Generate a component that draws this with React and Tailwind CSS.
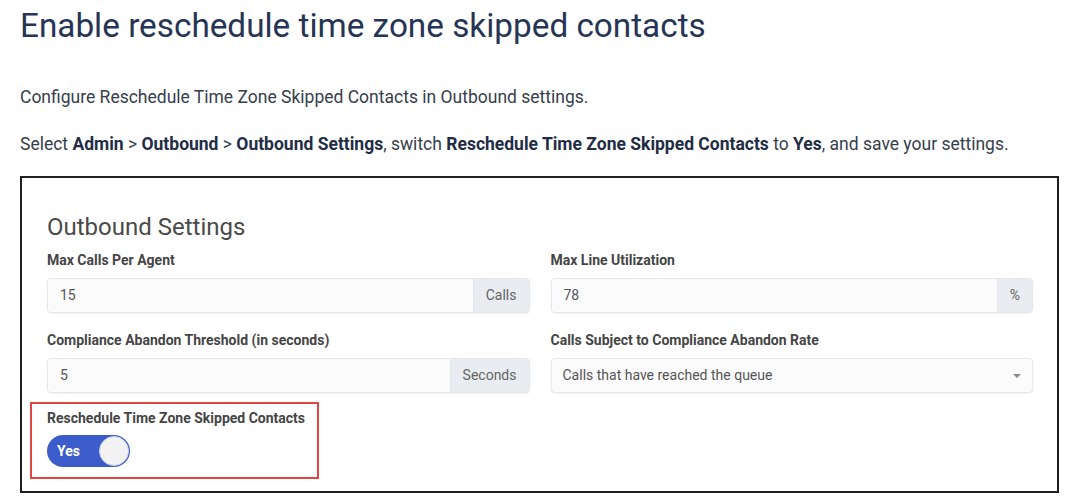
import React from 'react';

const Field = ({ label, children }) => (
  <div className="flex flex-col">
    <label className="text-[14px] leading-[20px] font-bold text-[#454545]">{label}</label>
    <div className="mt-[8px]">{children}</div>
  </div>
);

const AddonInput = ({ value, addon }) => (
  <div className="flex h-[35px] rounded-[4px] border border-[#e3e6ea] shadow-[0_1px_2px_rgba(0,0,0,0.06)] overflow-hidden">
    <div className="flex-1 flex items-center pl-[12px] bg-[#fbfbfc] text-[14px] text-[#555]">{value}</div>
    <div className="flex items-center px-[12px] bg-[#e9ecf0] border-l border-[#e3e6ea] text-[14px] text-[#666]">{addon}</div>
  </div>
);

const App = () => {
  return (
    <div className="w-[1072px] h-[501px] bg-white overflow-hidden font-['Roboto','Liberation_Sans',sans-serif]">
      <div className="pl-5 pr-[14px]">
        <h1 className="pt-[6px] text-[33.3px] leading-[40px] text-[#263455] font-normal">
          Enable reschedule time zone skipped contacts
        </h1>
        <p className="mt-[39px] text-[17.5px] leading-[24px] text-[#363e4c]">
          Configure Reschedule Time Zone Skipped Contacts in Outbound settings.
        </p>
        <p className="mt-[23px] text-[17.5px] leading-[24px] text-[#363e4c]">
          Select <b className="font-bold text-[#222d45]">Admin</b> &gt; <b className="font-bold text-[#222d45]">Outbound</b> &gt;{' '}
          <b className="font-bold text-[#222d45]">Outbound Settings</b>, switch{' '}
          <b className="font-bold text-[#222d45]">Reschedule Time Zone Skipped Contacts</b> to{' '}
          <b className="font-bold text-[#222d45]">Yes</b>, and save your settings.
        </p>

        {/* screenshot frame */}
        <div className="mt-[20px] w-[1039px] h-[317px] border-2 border-[#1f1f1f] pl-[25px] pr-[24px] pt-[33px]">
          <h2 className="text-[24px] leading-[32px] text-[#4a4a4a] font-normal">Outbound Settings</h2>
          <div className="mt-[7px] grid grid-cols-2 gap-x-[21px] gap-y-[17px]">
            <Field label="Max Calls Per Agent">
              <AddonInput value="15" addon="Calls" />
            </Field>
            <Field label="Max Line Utilization">
              <AddonInput value="78" addon="%" />
            </Field>
            <Field label="Compliance Abandon Threshold (in seconds)">
              <AddonInput value="5" addon="Seconds" />
            </Field>
            <Field label="Calls Subject to Compliance Abandon Rate">
              <div className="flex items-center justify-between h-[35px] rounded-[4px] border border-[#e6e8eb] bg-[#fbfbfc] shadow-[0_1px_2px_rgba(0,0,0,0.06)] pl-[11px] pr-[10px] text-[14px] text-[#555]">
                <span>Calls that have reached the queue</span>
                <svg width="10" height="6" viewBox="0 0 10 6">
                  <path d="M1 1 L5 5 L9 1 Z" fill="#8a8a8a" />
                </svg>
              </div>
            </Field>
          </div>

          {/* highlighted field */}
          <div className="mt-[9px] -ml-[17px] w-[289px] h-[77px] border-2 border-[#e2463e] pl-[15px] pt-[4px]">
            <div className="text-[14px] leading-[20px] font-bold text-[#454545]">Reschedule Time Zone Skipped Contacts</div>
            <div className="mt-[7px] w-[83px] h-[32px] rounded-full bg-[#3d5ccb] flex items-center justify-between pl-[10px] pr-[1px]">
              <span className="text-[14px] font-bold text-white">Yes</span>
              <span className="w-[30px] h-[30px] rounded-full bg-[#f2f2f2] border border-[#c9d1ec]" />
            </div>
          </div>
        </div>
      </div>
    </div>
  );
};

export default App;
